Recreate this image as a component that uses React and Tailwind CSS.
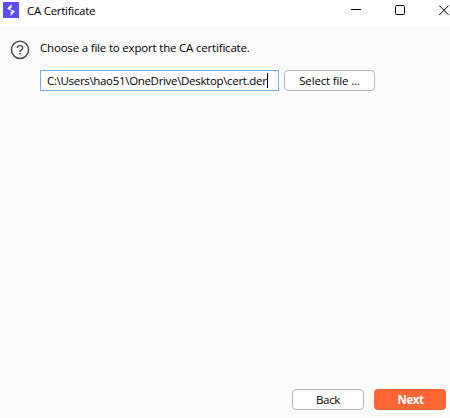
import React from 'react';

const buttonBase = 'flex h-[21px] shrink-0 items-center justify-center rounded whitespace-pre';

function TitleBar() {
  return (
    <header className="flex h-[25px] bg-white pl-[3px]">
      <svg className="mt-[2px] shrink-0" width="16" height="16" viewBox="0 0 16 16">
        <rect width="16" height="16" fill="#5b4cfb" />
        <path d="M8.6 2V5.6L6.9 6.9L11.6 8.9V9.7L7.6 14V10.3L9.2 9.1L4.5 7.1V6.3Z" fill="#f4f2ff" />
      </svg>
      <h1 className="mt-[3px] ml-[8px] text-[11.5px] leading-4 tracking-[-0.28px] whitespace-nowrap">CA Certificate</h1>
      <div className="ml-auto flex pt-[5px]">
        <svg width="99" height="11" viewBox="0 0 99 11" fill="none" stroke="#000">
          <path d="M0 4.5h10" />
          <rect x="44.5" y="0.5" width="9" height="9" rx="1.2" />
          <path d="M88.2 0.5l9.5 9.5M97.7 0.5l-9.5 9.5" />
        </svg>
      </div>
    </header>
  );
}

export default function App() {
  return (
    <div className="flex h-[418px] w-[450px] flex-col overflow-hidden bg-[#fbfbfb] font-['Open_Sans','Noto_Sans',sans-serif] text-[11.5px] leading-4 text-black">
      <TitleBar />
      <main className="flex flex-1 pt-[15px] pl-[10px]">
        <svg className="shrink-0" width="20" height="20" viewBox="0 0 20 20" fill="none" stroke="#4b4b4b">
          <circle cx="10" cy="9.8" r="8.6" strokeWidth="1.5" />
          <path d="M7.3 8.1C7.3 4.7 12.7 4.8 12.7 8C12.7 10 10 9.8 10 12" strokeWidth="1.4" />
          <path d="M10 13v1.5" strokeWidth="1.5" />
        </svg>
        <div className="ml-[10px]">
          <p className="tracking-[-0.19px] whitespace-nowrap">Choose a file to export the CA certificate.</p>
          <div className="mt-[14px] flex gap-[5px]">
            <div className="flex h-[21px] w-[239px] items-center border border-[#7eaee0] bg-white pl-[6px]">
              <span className="tracking-[-0.32px] whitespace-nowrap">C:\Users\hao51\OneDrive\Desktop\cert.der</span>
              <span className="h-[15px] w-px shrink-0 bg-black" />
            </div>
            <button className={`${buttonBase} w-[91px] border border-[#b9b5b9] bg-white tracking-[-0.15px]`}>Select file ...</button>
          </div>
        </div>
      </main>
      <footer className="flex justify-end gap-[10px] pr-[4px] pb-[8px]">
        <button className={`${buttonBase} w-[72px] border border-[#b9b5b9] bg-white tracking-[-0.3px]`}>Back</button>
        <button className={`${buttonBase} w-[72px] bg-[#ff6633] pl-px font-bold tracking-[-0.5px] text-white`}>Next</button>
      </footer>
    </div>
  );
}
